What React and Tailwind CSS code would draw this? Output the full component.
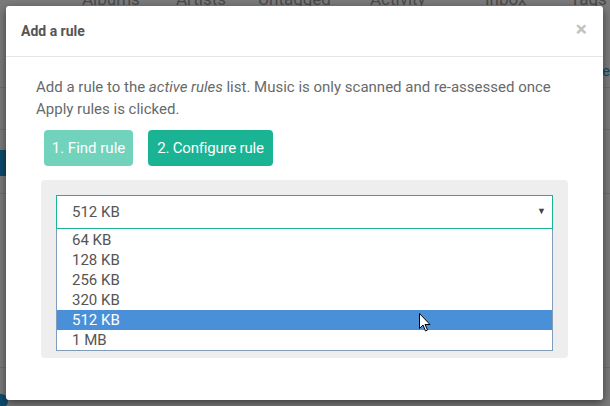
import { useState } from 'react';

const sizes = ['64 KB', '128 KB', '256 KB', '320 KB', '512 KB', '1 MB'];

function Cursor() {
    return (
        <svg className="absolute left-[362px] top-[3px]" width="12" height="19" viewBox="0 0 12 19">
            <path d="M0.5 0.5 L0.5 15.5 L4 12 L6.5 18 L8.5 17 L6 11.5 L11 11.5 Z" fill="#fff" stroke="#000" strokeWidth="1" strokeLinejoin="round" />
        </svg>
    );
}

export default function App() {
    const [value, setValue] = useState('512 KB');

    return (
        <div className="relative w-[610px] h-[406px] overflow-hidden bg-[#7a7a7a]" style={{ fontFamily: 'Roboto, "Noto Sans", sans-serif' }}>
            {/* Dimmed page behind the dialog */}
            <div className="flex flex-col">
                <div className="flex h-[6px] items-end pl-[82px] text-[17px] leading-[13px] text-[#4a4a4a] overflow-hidden">
                    <span className="w-[94px]">Albums</span>
                    <span className="w-[82px]">Artists</span>
                    <span className="w-[112px]">Untagged</span>
                    <span className="w-[115px]">Activity</span>
                    <span className="w-[85px]">Inbox</span>
                    <span>Tags</span>
                </div>
                <div className="h-[82px] border-b border-[#6e6e6e]" />
                <div className="h-[42px] border-b border-[#6e6e6e]" />
                <div className="h-[20px]" />
                <div className="h-[26px] w-[10px] bg-[#0e4a6c]" />
                <div className="h-[18px] border-b border-[#6e6e6e]" />
                <div className="h-[174px] border-b border-[#6e6e6e]" />
            </div>
            <div className="absolute left-[-6px] top-[394px] w-[14px] h-[14px] rounded-full bg-[#0e4a6c]" />
            <div className="absolute right-0 top-[60px] text-[15px] text-[#0e4a6c]">e</div>

            {/* Modal */}
            <div className="absolute left-[6px] top-[6px] w-[597px] h-[394px] bg-white rounded-[3px] shadow-[0_3px_9px_rgba(0,0,0,0.5)]">
                <div className="flex items-center justify-between h-[51px] px-[15px] border-b border-[#e5e5e5]">
                    <h4 className="text-[14px] font-bold text-[#555]">Add a rule</h4>
                    <button className="text-[21px] font-bold leading-none text-[#c2c2c2] mr-[1px] mt-[-3px]">×</button>
                </div>

                <div className="pl-[30px] pr-[34px] pt-[19px]">
                    <p className="text-[15px] text-[#676a6c]" style={{ lineHeight: '22px' }}>
                        Add a rule to the <em>active rules</em> list. Music is only scanned and re-assessed once Apply rules is clicked.
                    </p>

                    <div className="flex gap-[15px] mt-[10px] ml-[8px]">
                        <button className="w-[89px] h-[36px] rounded-[4px] bg-[#72d3bd] text-white text-[15px]">1. Find rule</button>
                        <button className="w-[125px] h-[36px] rounded-[4px] bg-[#1ab394] text-white text-[15px] tracking-[-0.2px]">2. Configure rule</button>
                    </div>

                    <div className="mt-[14px] ml-[5px] w-[527px] h-[178px] bg-[#eeeeee] rounded-[4px] p-[15px]">
                        <div className="flex items-center justify-between h-[34px] pl-[15px] pr-[6px] bg-white border border-[#1ab394] text-[15px] text-[#555]">
                            <span>{value}</span>
                            <span className="text-[9px] text-[#444]">▼</span>
                        </div>
                        <ul className="relative border border-t-0 border-[#7f9db9] bg-white pt-[1px]">
                            {sizes.map(s => (
                                <li
                                    key={s}
                                    onClick={() => setValue(s)}
                                    className={`relative h-[20px] pl-[15px] text-[15px] leading-[20px] ${s === value ? 'bg-[#4a90d9] text-white' : 'text-[#555]'}`}
                                >
                                    {s}
                                    {s === '512 KB' && <Cursor />}
                                </li>
                            ))}
                        </ul>
                    </div>
                </div>
            </div>
        </div>
    );
}
